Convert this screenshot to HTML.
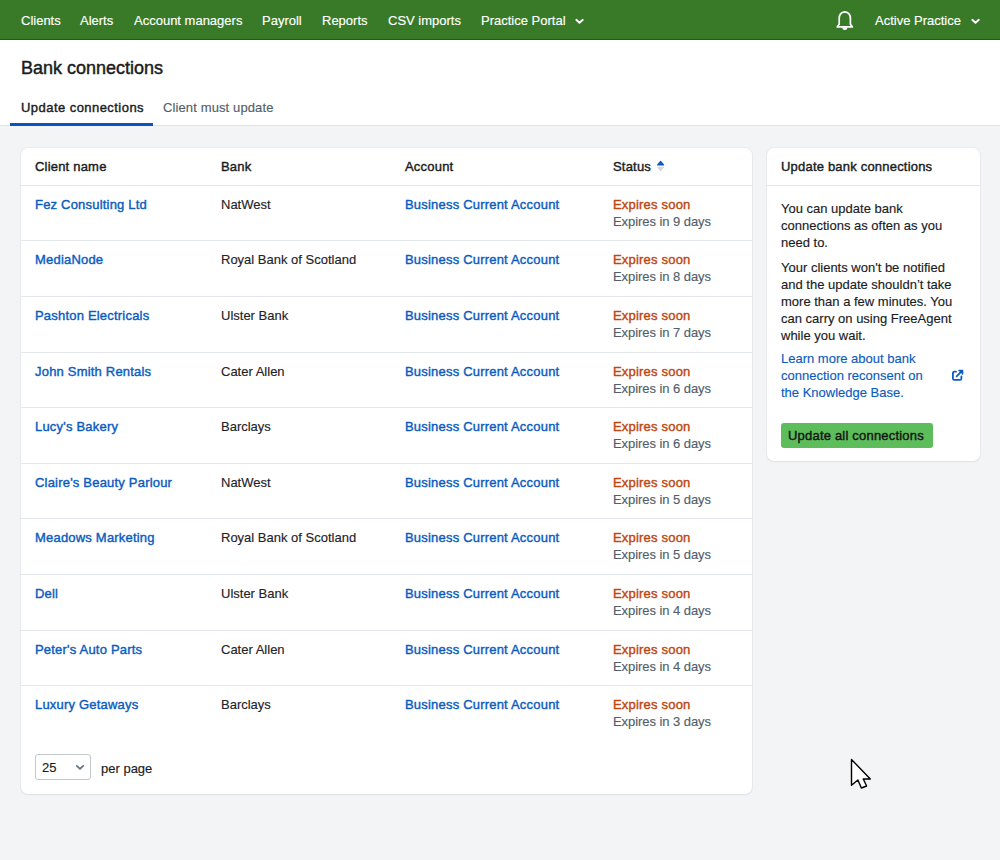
<!DOCTYPE html>
<html><head><meta charset="utf-8">
<style>
*{box-sizing:border-box;margin:0;padding:0}
html,body{width:1000px;height:860px;overflow:hidden}
body{background:#f3f4f6;font-family:"Liberation Sans",sans-serif;font-size:13px;color:#1f2326;position:relative}
.t{position:absolute;white-space:nowrap;line-height:17px;font-size:13px;-webkit-text-stroke:0.15px currentColor}
.m{-webkit-text-stroke:0.4px currentColor;letter-spacing:0.2px}
.link{color:#0b5cc0}
.orange{color:#bf4710}
.grey{color:#515f6b;letter-spacing:-0.06px}
#nav{position:absolute;left:0;top:0;width:1000px;height:40px;background:#387a28;border-bottom:1px solid #1f600f;box-shadow:0 1px 0 rgba(31,96,15,0.35)}
#nav .t{color:#fff;top:12px}
#head{position:absolute;left:0;top:40px;width:1000px;height:86px;background:#fff;border-bottom:1px solid #dfe2e6}
.card{position:absolute;background:#fff;border-radius:7px;box-shadow:0 0 0 1px rgba(20,30,50,0.035),0 1px 2px rgba(20,30,50,0.06)}
.hr{position:absolute;left:0;right:0;height:1px;background:#e3e6ea}
</style></head><body>
<div id="nav">
<div class="t" style="left:21px">Clients</div>
<div class="t" style="left:80px">Alerts</div>
<div class="t" style="left:134px">Account managers</div>
<div class="t" style="left:262px">Payroll</div>
<div class="t" style="left:322px">Reports</div>
<div class="t" style="left:388px">CSV imports</div>
<div class="t" style="left:481px">Practice Portal</div>
<svg style="position:absolute;left:574px;top:17px" width="11" height="8" viewBox="0 0 11 8"><path d="M2.3 2.8 L5.5 5.8 L8.8 2.8" fill="none" stroke="#fff" stroke-width="1.9" stroke-linecap="round" stroke-linejoin="round"/></svg>
<svg style="position:absolute;left:835px;top:10px" width="20" height="21" viewBox="0 0 20 21"><path d="M9.8 1.9 C12.8 2.3 15.4 4.6 15.4 8.6 L15.4 14.2 L17.4 16.9 L2.2 16.9 L4.2 14.2 L4.2 8.6 C4.2 4.6 6.8 2.3 9.8 1.9 Z" fill="none" stroke="#fff" stroke-width="1.7" stroke-linejoin="round"/><path d="M7.3 17.6 A2.5 2.5 0 0 0 12.3 17.6 Z" fill="#fff"/><circle cx="9.8" cy="1.9" r="1" fill="#fff"/></svg>
<div class="t" style="left:875px">Active Practice</div>
<svg style="position:absolute;left:970px;top:17px" width="11" height="8" viewBox="0 0 11 8"><path d="M2.3 2.8 L5.5 5.8 L8.8 2.8" fill="none" stroke="#fff" stroke-width="1.9" stroke-linecap="round" stroke-linejoin="round"/></svg>
</div>
<div id="head">
<div class="t" style="left:21px;top:17px;font-size:18px;line-height:22px;color:#1a1c1e;-webkit-text-stroke:0.45px #1a1c1e">Bank connections</div>
<div class="t m" style="left:21px;top:59px;color:#1a1c1e;letter-spacing:0.45px">Update connections</div>
<div class="t grey" style="left:163px;top:59px;letter-spacing:0.12px">Client must update</div>
<div style="position:absolute;left:10px;top:83px;width:143px;height:3px;background:#0a52c4"></div>
</div>

<div class="card" style="left:21px;top:148px;width:731px;height:646px">
<div class="t m" style="left:14px;top:10px;color:#1a1c1e">Client name</div>
<div class="t m" style="left:200px;top:10px;color:#1a1c1e">Bank</div>
<div class="t m" style="left:384px;top:10px;color:#1a1c1e">Account</div>
<div class="t m" style="left:592px;top:10px;color:#1a1c1e">Status</div>
<svg style="position:absolute;left:635px;top:12px" width="10" height="12" viewBox="0 0 10 12"><path d="M1.6 5 L4.6 1.5 L7.6 5 Z" fill="#0b5cc0" stroke="#0b5cc0" stroke-width="1.2" stroke-linejoin="round"/><path d="M1.6 7.2 L4.6 10.9 L7.6 7.2 Z" fill="#d3d7dc" stroke="#d3d7dc" stroke-width="1" stroke-linejoin="round"/></svg>
<div class="hr" style="top:37px"></div>
<div class="t m link" style="left:14px;top:48px">Fez Consulting Ltd</div>
<div class="t" style="left:200px;top:48px">NatWest</div>
<div class="t m link" style="left:384px;top:48px">Business Current Account</div>
<div class="t m orange" style="left:592px;top:48px">Expires soon</div>
<div class="t grey" style="left:592px;top:65px">Expires in 9 days</div><div class="hr" style="top:92px"></div>
<div class="t m link" style="left:14px;top:103px">MediaNode</div>
<div class="t" style="left:200px;top:103px">Royal Bank of Scotland</div>
<div class="t m link" style="left:384px;top:103px">Business Current Account</div>
<div class="t m orange" style="left:592px;top:103px">Expires soon</div>
<div class="t grey" style="left:592px;top:120px">Expires in 8 days</div><div class="hr" style="top:148px"></div>
<div class="t m link" style="left:14px;top:159px">Pashton Electricals</div>
<div class="t" style="left:200px;top:159px">Ulster Bank</div>
<div class="t m link" style="left:384px;top:159px">Business Current Account</div>
<div class="t m orange" style="left:592px;top:159px">Expires soon</div>
<div class="t grey" style="left:592px;top:176px">Expires in 7 days</div><div class="hr" style="top:204px"></div>
<div class="t m link" style="left:14px;top:215px">John Smith Rentals</div>
<div class="t" style="left:200px;top:215px">Cater Allen</div>
<div class="t m link" style="left:384px;top:215px">Business Current Account</div>
<div class="t m orange" style="left:592px;top:215px">Expires soon</div>
<div class="t grey" style="left:592px;top:232px">Expires in 6 days</div><div class="hr" style="top:259px"></div>
<div class="t m link" style="left:14px;top:270px">Lucy's Bakery</div>
<div class="t" style="left:200px;top:270px">Barclays</div>
<div class="t m link" style="left:384px;top:270px">Business Current Account</div>
<div class="t m orange" style="left:592px;top:270px">Expires soon</div>
<div class="t grey" style="left:592px;top:287px">Expires in 6 days</div><div class="hr" style="top:315px"></div>
<div class="t m link" style="left:14px;top:326px">Claire's Beauty Parlour</div>
<div class="t" style="left:200px;top:326px">NatWest</div>
<div class="t m link" style="left:384px;top:326px">Business Current Account</div>
<div class="t m orange" style="left:592px;top:326px">Expires soon</div>
<div class="t grey" style="left:592px;top:343px">Expires in 5 days</div><div class="hr" style="top:370px"></div>
<div class="t m link" style="left:14px;top:381px">Meadows Marketing</div>
<div class="t" style="left:200px;top:381px">Royal Bank of Scotland</div>
<div class="t m link" style="left:384px;top:381px">Business Current Account</div>
<div class="t m orange" style="left:592px;top:381px">Expires soon</div>
<div class="t grey" style="left:592px;top:398px">Expires in 5 days</div><div class="hr" style="top:426px"></div>
<div class="t m link" style="left:14px;top:437px">Dell</div>
<div class="t" style="left:200px;top:437px">Ulster Bank</div>
<div class="t m link" style="left:384px;top:437px">Business Current Account</div>
<div class="t m orange" style="left:592px;top:437px">Expires soon</div>
<div class="t grey" style="left:592px;top:454px">Expires in 4 days</div><div class="hr" style="top:482px"></div>
<div class="t m link" style="left:14px;top:493px">Peter's Auto Parts</div>
<div class="t" style="left:200px;top:493px">Cater Allen</div>
<div class="t m link" style="left:384px;top:493px">Business Current Account</div>
<div class="t m orange" style="left:592px;top:493px">Expires soon</div>
<div class="t grey" style="left:592px;top:510px">Expires in 4 days</div><div class="hr" style="top:537px"></div>
<div class="t m link" style="left:14px;top:548px">Luxury Getaways</div>
<div class="t" style="left:200px;top:548px">Barclays</div>
<div class="t m link" style="left:384px;top:548px">Business Current Account</div>
<div class="t m orange" style="left:592px;top:548px">Expires soon</div>
<div class="t grey" style="left:592px;top:565px">Expires in 3 days</div>
<div style="position:absolute;left:14px;top:606px;width:56px;height:26px;border:1px solid #c2c8ce;border-radius:3px"></div>
<div class="t" style="left:21px;top:611px;color:#1a1c1e">25</div>
<svg style="position:absolute;left:54px;top:616px" width="10" height="7" viewBox="0 0 10 7"><path d="M1.8 1.8 L5 4.8 L8.2 1.8" fill="none" stroke="#5d7283" stroke-width="1.7" stroke-linecap="round" stroke-linejoin="round"/></svg>
<div class="t" style="left:80px;top:612px;color:#1a1c1e">per page</div>
</div>

<div class="card" style="left:767px;top:148px;width:213px;height:313px">
<div class="t m" style="left:14px;top:10px;color:#1a1c1e">Update bank connections</div>
<div class="hr" style="top:37px"></div>
<div class="t" style="left:14px;top:52px;color:#1a1c1e">You can update bank<br>connections as often as you<br>need to.</div>
<div class="t" style="left:14px;top:111px;color:#1a1c1e">Your clients won't be notified<br>and the update shouldn’t take<br>more than a few minutes. You<br>can carry on using FreeAgent<br>while you wait.</div>
<div class="t link" style="left:14px;top:202px">Learn more about bank<br>connection reconsent on<br>the Knowledge Base.</div>
<svg style="position:absolute;left:184px;top:220px" width="14" height="14" viewBox="0 0 14 14"><path d="M5 3.7 L3.4 3.7 Q1.9 3.7 1.9 5.2 L1.9 10.4 Q1.9 11.9 3.4 11.9 L8.9 11.9 Q10.4 11.9 10.4 10.4 L10.4 8.5" fill="none" stroke="#0b5cc0" stroke-width="1.8" stroke-linecap="round" stroke-linejoin="round"/><path d="M5.6 8.3 L11.2 2.7 M8.2 2.6 L11.4 2.6 L11.4 5.8" fill="none" stroke="#0b5cc0" stroke-width="1.8" stroke-linecap="round" stroke-linejoin="round"/></svg>
<div style="position:absolute;left:14px;top:275px;width:152px;height:25px;background:#5cbd5a;border-radius:3px"></div>
<div class="t m" style="left:21px;top:279px;color:#141414">Update all connections</div>
</div>

<svg style="position:absolute;left:849px;top:757px" width="26" height="36" viewBox="0 0 26 36"><path d="M2.5 2.5 L2.5 28.3 L8.9 23 L12.4 31 L17.6 29 L14.3 22 L21.3 22 Z" fill="#fff" stroke="#000" stroke-width="1.4" stroke-linejoin="round"/></svg>
</body></html>
